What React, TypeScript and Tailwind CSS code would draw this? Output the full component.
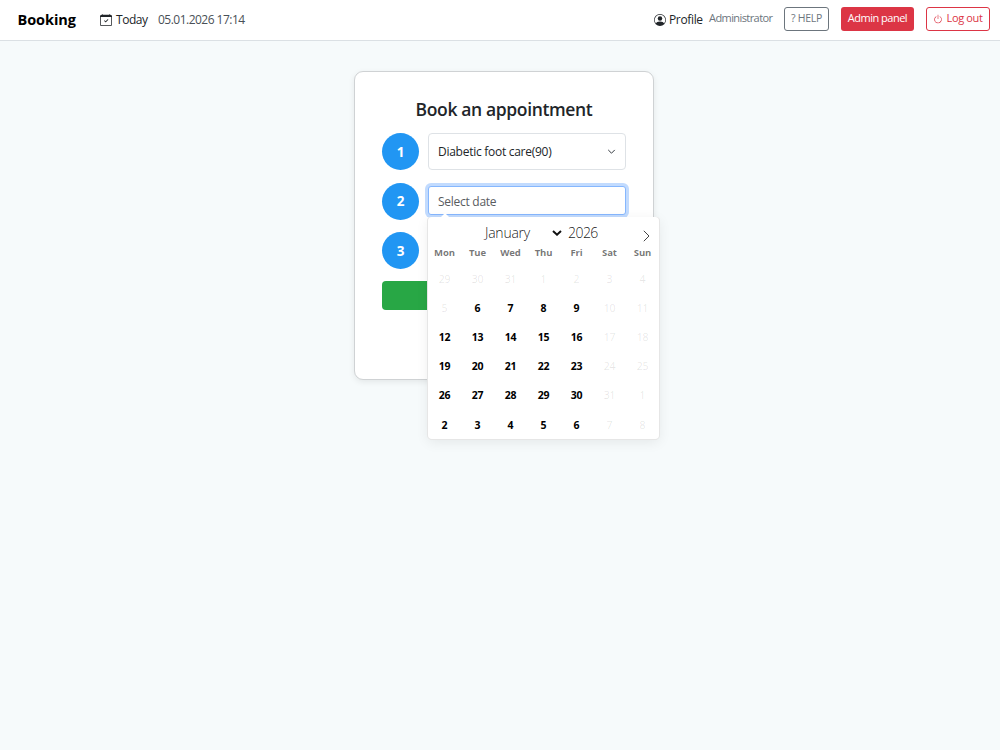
import { useState } from "react";
import { BsCalendarCheck, BsPersonCircle, BsPower } from "react-icons/bs";

const weekdays = ["Mon", "Tue", "Wed", "Thu", "Fri", "Sat", "Sun"];

// six weeks starting on Monday 29 December 2025
const days = Array.from({ length: 42 }, (_, i) => {
  const date = new Date(2025, 11, 29 + i);
  return { key: i, label: date.getDate(), disabled: i < 8 || i % 7 > 4 };
});

function Navbar() {
  return (
    <nav className="flex h-[41px] items-start border-b border-[#dbe0e4] bg-white pr-2.5 pl-[17.5px]">
      <a className="mt-2.5 w-[82.5px] text-[14.5px] leading-5 font-bold tracking-[-0.05px] text-black">Booking</a>
      <a className="mt-2.5 flex w-[58px] items-center gap-[4px] text-[12px] leading-5 tracking-[-0.45px] text-[#212529]">
        <BsCalendarCheck size={12} className="shrink-0" /> Today
      </a>
      <span className="mt-2.5 text-[12px] leading-5 tracking-[-0.52px] text-[#495057]">05.01.2026 17:14</span>

      <div className="ml-auto flex items-start">
        <a className="mt-2.5 flex w-[55px] items-center gap-[3px] text-[12px] leading-5 tracking-[-0.35px] whitespace-nowrap text-[#212529]">
          <BsPersonCircle size={12} className="shrink-0" /> Profile
        </a>
        <span className="mt-2 w-[75px] text-[11px] leading-5 tracking-[-0.58px] text-[#6c757d]">Administrator</span>
        <button className="mt-[7px] h-6 w-[45px] rounded-[3px] border border-[#6c757d] text-[10.5px] tracking-[-0.3px] whitespace-nowrap text-[#6c757d]">
          ? HELP
        </button>
        <button className="mt-[7px] ml-3 h-6 w-[73px] rounded-[3px] bg-[#dc3545] pb-0.5 text-[11px] tracking-[-0.5px] whitespace-nowrap text-white">
          Admin panel
        </button>
        <button className="mt-[7px] ml-3 flex h-6 w-16 items-center justify-center gap-[3px] rounded-[3px] border border-[#dc3545] pb-px text-[11px] tracking-[-0.35px] whitespace-nowrap text-[#dc3545]">
          <BsPower size={10} /> Log out
        </button>
      </div>
    </nav>
  );
}

function StepNumber({ n }: { n: number }) {
  return (
    <div className="flex size-[37px] shrink-0 items-center justify-center rounded-full bg-[#2196f3] pt-px text-[13.5px] font-bold text-white">
      {n}
    </div>
  );
}

function Calendar() {
  const [selected, setSelected] = useState<number | null>(null);

  return (
    <div className="absolute top-[31px] left-0 z-10 h-[222px] w-[231px] rounded-[4px] bg-white shadow-[1px_0_0_#e6e6e6,-1px_0_0_#e6e6e6,0_1px_0_#e6e6e6,0_3px_13px_rgba(0,0,0,0.08)]">
      <span className="absolute -top-1 left-[13px] border-x-4 border-b-4 border-x-transparent border-b-white" />
      <div className="flex h-[27px] items-center pt-1 pl-[57px] text-[14px] leading-5 font-light text-black/90">
        <span className="w-[67px] tracking-[-0.25px]">January</span>
        <svg width="10" height="6" viewBox="0 0 10 6" fill="none" stroke="#111" strokeWidth="2">
          <path d="M1 1l4 3.7L9 1" />
        </svg>
        <span className="ml-[6px] tracking-[-0.55px]">2026</span>
        <svg className="mt-1.5 mr-[9px] ml-auto" width="7" height="12" viewBox="0 0 7 12" fill="none" stroke="#444">
          <path d="M.8.8L6 6 .8 11.2" />
        </svg>
      </div>
      <div className="grid h-[21px] grid-cols-7 text-center text-[9.5px] leading-[18px] font-bold tracking-[-0.1px] text-black/55">
        {weekdays.map((d) => <span key={d}>{d}</span>)}
      </div>
      <div className="grid h-[175px] grid-cols-7 grid-rows-6">
        {days.map((d) => (
          <button
            key={d.key}
            disabled={d.disabled}
            onClick={() => setSelected(d.key)}
            className={`rounded-full text-[10.5px] tracking-[-0.2px] ${
              d.disabled ? "text-black/10" : selected === d.key ? "bg-[#569ff7] font-bold text-white" : "font-bold text-black"
            }`}
          >
            {d.label}
          </button>
        ))}
      </div>
    </div>
  );
}

export default function App() {
  return (
    <div className="min-h-screen bg-[#f6fafb] font-['Open_Sans','Noto_Sans',sans-serif]">
      <Navbar />
      <main className="pt-[30px] pl-[354px]">
        <section className="h-[309px] w-[300px] rounded-[9px] border border-[#cfd2d4] bg-white px-[27px] pt-[24px] shadow-[0_2px_6px_rgba(0,0,0,0.08)]">
          <h1 className="mb-[11px] text-center text-[17.5px] leading-[26px] font-semibold tracking-[-0.36px] text-[#212529]">Book an appointment</h1>

          <div className="mb-3 flex items-center gap-[9px]">
            <StepNumber n={1} />
            <div className="flex h-[37px] flex-1 items-center justify-between rounded-[4px] border border-[#dee2e6] px-[9px] text-[12px] tracking-[-0.27px] text-[#212529]">
              Diabetic foot care(90)
              <svg width="9" height="6" viewBox="0 0 9 6" fill="none" stroke="#343a40" strokeLinecap="round" strokeLinejoin="round">
                <path d="M1.5 1.2l3 3 3-3" />
              </svg>
            </div>
          </div>

          <div className="mb-3 flex h-[38px] items-center gap-[9px]">
            <StepNumber n={2} />
            <div className="relative mb-px flex-1">
              <input
                readOnly
                placeholder="Select date"
                className="block h-[29px] w-full rounded-[3px] border border-[#86b7fe] bg-white px-[9px] pt-0.5 text-[12px] tracking-[-0.27px] shadow-[0_0_0_3px_#c2dbfe] outline-none placeholder:text-[#595c5f]"
              />
              <Calendar />
            </div>
          </div>

          <div className="mb-3 flex items-center">
            <StepNumber n={3} />
          </div>
          <button className="h-[29px] w-full rounded-[4px] bg-[#28a745]" aria-label="Book" />
        </section>
      </main>
    </div>
  );
}
